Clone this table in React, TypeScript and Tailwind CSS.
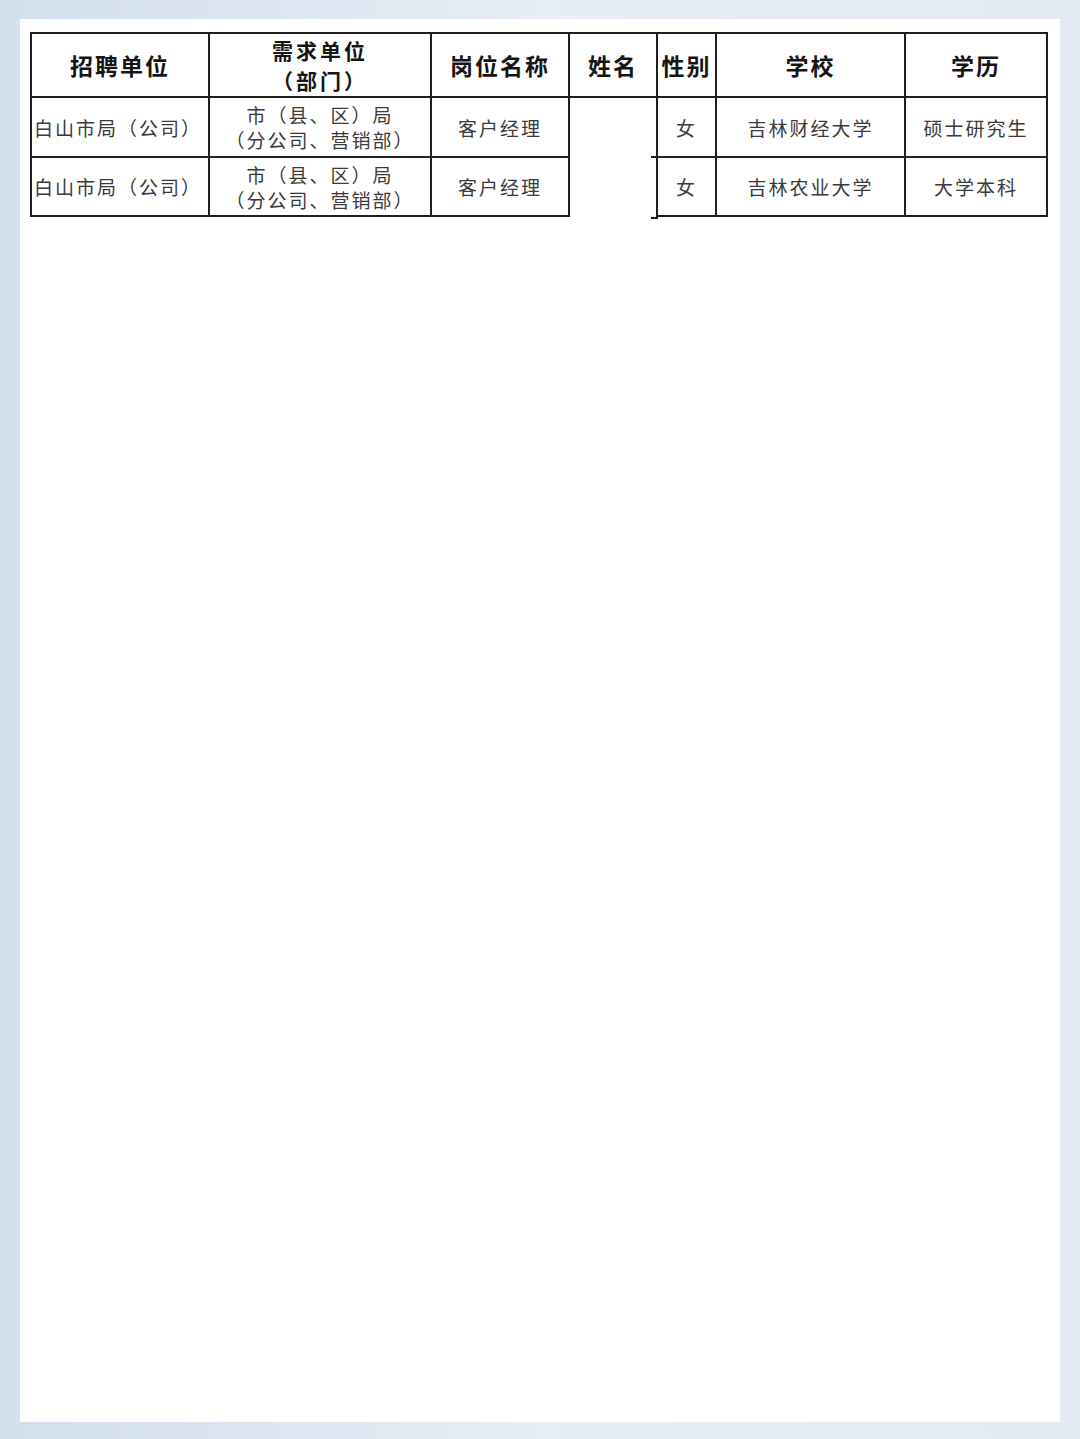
const headers = ['招聘单位', '需求单位', '岗位名称', '姓名', '性别', '学校', '学历']

const rows = [
    { unit: '白山市局（公司）', school: '吉林财经大学', degree: '硕士研究生' },
    { unit: '白山市局（公司）', school: '吉林农业大学', degree: '大学本科' }
]

const cell = 'border-r-2 border-b-2 border-[#1f1f1f] flex items-center justify-center text-center'
const head = 'text-[23px] font-bold text-[#151515] leading-[27px] tracking-[2px]'
const body = 'text-[19px] text-[#3a3a3a] leading-[25px] tracking-[2px]'

export default function App() {
    return (
        <div
            className="h-[1439px] w-full overflow-hidden bg-gradient-to-r from-[#d3dfed] via-[#e6edf5] to-[#e3eaf3] pt-[19px] pl-[20px]"
            style={{ fontFamily: '"Noto Sans CJK SC", "Noto Sans", sans-serif' }}
        >
            <div className="h-[1403px] w-[1040px] bg-white pt-[13px] pl-[10px]">
                <div className="grid w-fit grid-cols-[178px_222px_138px_88px_59px_189px_142px] grid-rows-[64px_60px_59px] border-l-2 border-t-2 border-[#1f1f1f]">
                    {headers.map((h, i) => (
                        <div key={h} className={`${cell} ${head}`}>
                            {i === 1 ? (
                                <div className="flex flex-col text-[21px] leading-[30px] tracking-[3px]">
                                    <span>需求单位</span>
                                    <span>（部门）</span>
                                </div>
                            ) : (
                                h
                            )}
                        </div>
                    ))}

                    {rows.map((r, idx) => (
                        <div key={idx} className="contents">
                            <div className={`${cell} ${body} justify-start pl-[2px] whitespace-nowrap`}>
                                {r.unit}
                            </div>
                            <div className={`${cell} ${body}`}>
                                <div className="flex flex-col whitespace-nowrap">
                                    <span>市（县、区）局</span>
                                    <span>（分公司、营销部）</span>
                                </div>
                            </div>
                            <div className={`${cell} ${body}`}>客户经理</div>
                            {idx === 0 && (
                                <div className="relative row-span-2 border-r-2 border-[#1f1f1f]">
                                    {/* short stubs where the blanked cell meets the next column */}
                                    <div className="absolute right-[-2px] top-[58px] h-[2px] w-[7px] bg-[#1f1f1f]" />
                                    <div className="absolute right-[-2px] bottom-[-2px] h-[2px] w-[7px] bg-[#1f1f1f]" />
                                </div>
                            )}
                            <div className={`${cell} ${body}`}>女</div>
                            <div className={`${cell} ${body}`}>{r.school}</div>
                            <div className={`${cell} ${body} tracking-[1.5px]`}>{r.degree}</div>
                        </div>
                    ))}
                </div>
            </div>
        </div>
    )
}
